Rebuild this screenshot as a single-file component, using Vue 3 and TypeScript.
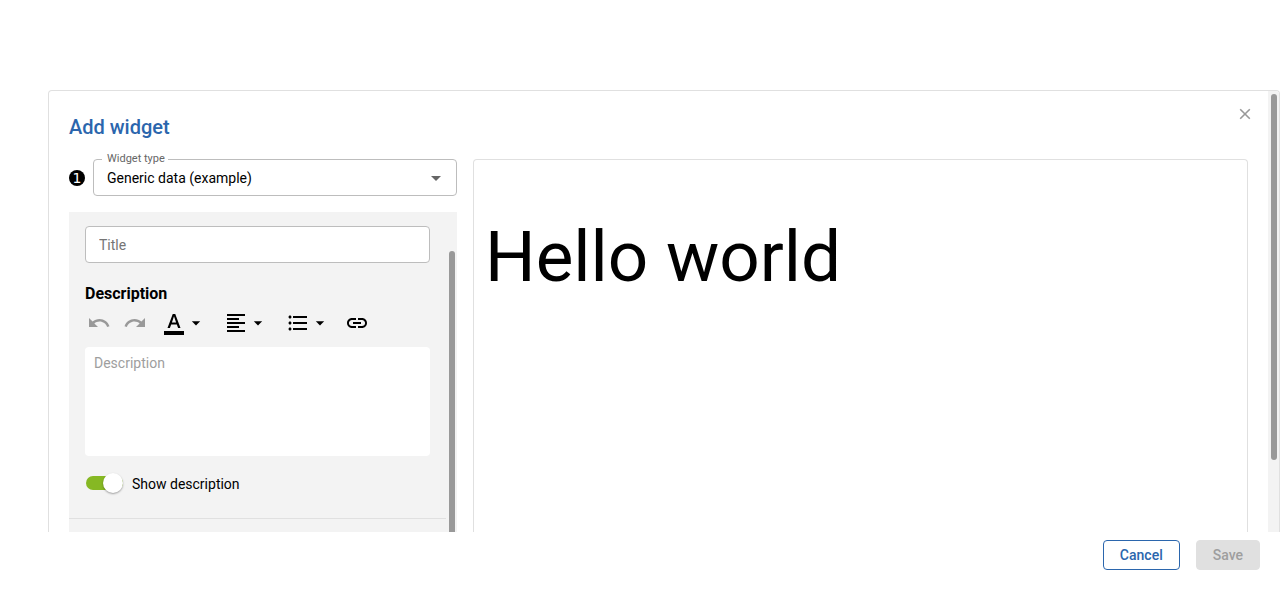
<script setup lang="ts">
import { ref } from 'vue'

interface Tool {
  name: string
  path: string
  menu: boolean
  disabled: boolean
}

const tools: Tool[] = [
  {
    name: 'Undo',
    path: 'M12.5 8c-2.65 0-5.05.99-6.9 2.6L2 7v9h9l-3.62-3.62c1.39-1.16 3.16-1.88 5.12-1.88 3.54 0 6.55 2.31 7.6 5.5l2.37-.78C21.08 11.03 17.15 8 12.5 8z',
    menu: false,
    disabled: true,
  },
  {
    name: 'Redo',
    path: 'M18.4 10.6C16.55 8.99 14.15 8 11.5 8c-4.65 0-8.58 3.03-9.96 7.22L3.9 16c1.05-3.19 4.05-5.5 7.6-5.5 1.95 0 3.73.72 5.12 1.88L13 16h9V7l-3.6 3.6z',
    menu: false,
    disabled: true,
  },
  {
    name: 'Text color',
    path: 'M2 20h20v4H2zM5.49 17h2.42l1.27-3.58h5.65L16.09 17h2.42L13.25 3h-2.5L5.49 17zm4.42-5.61 2.03-5.79h.12l2.03 5.79H9.91z',
    menu: true,
    disabled: false,
  },
  {
    name: 'Alignment',
    path: 'M15 15H3v2h12v-2zm0-8H3v2h12V7zM3 13h18v-2H3v2zm0 8h18v-2H3v2zM3 3v2h18V3H3z',
    menu: true,
    disabled: false,
  },
  {
    name: 'List',
    path: 'M4 10.5c-.83 0-1.5.67-1.5 1.5s.67 1.5 1.5 1.5 1.5-.67 1.5-1.5-.67-1.5-1.5-1.5zm0-6c-.83 0-1.5.67-1.5 1.5S3.17 7.5 4 7.5 5.5 6.83 5.5 6 4.83 4.5 4 4.5zm0 12c-.83 0-1.5.68-1.5 1.5s.68 1.5 1.5 1.5 1.5-.68 1.5-1.5-.67-1.5-1.5-1.5zM7 19h14v-2H7v2zm0-6h14v-2H7v2zm0-8v2h14V5H7z',
    menu: true,
    disabled: false,
  },
  {
    name: 'Link',
    path: 'M3.9 12c0-1.71 1.39-3.1 3.1-3.1h4V7H7c-2.76 0-5 2.24-5 5s2.24 5 5 5h4v-1.9H7c-1.71 0-3.1-1.39-3.1-3.1zM8 13h8v-2H8v2zm9-6h-4v1.9h4c1.71 0 3.1 1.39 3.1 3.1s-1.39 3.1-3.1 3.1h-4V17h4c2.76 0 5-2.24 5-5s-2.24-5-5-5z',
    menu: false,
    disabled: false,
  },
]

const widgetType = ref('generic')
const title = ref('')
const description = ref('')
const showDescription = ref(true)
</script>

<template>
  <div class="page">
    <main class="dialog">
      <div class="content">
        <header class="head">
          <h2>Add widget</h2>
          <button class="close" type="button" aria-label="Close">
            <svg width="12" height="12" viewBox="0 0 12 12">
              <path d="M1.2 1.2l9.6 9.6M10.8 1.2l-9.6 9.6" fill="none" stroke="#999" stroke-width="1.6" />
            </svg>
          </button>
        </header>
        <div class="columns">
          <section class="settings">
            <div class="type-row">
              <span class="step">1</span>
              <div class="field">
                <label for="widget-type">Widget type</label>
                <select id="widget-type" v-model="widgetType">
                  <option value="generic">Generic data (example)</option>
                </select>
                <svg class="arrow" width="24" height="24" viewBox="0 0 24 24">
                  <path d="M7 10l5 5 5-5z" fill="#666" />
                </svg>
              </div>
            </div>
            <div class="panel">
              <div class="form">
                <div class="group">
                  <input v-model="title" class="title" type="text" placeholder="Title" aria-label="Title" />
                  <label class="caption" for="description">Description</label>
                  <div class="toolbar">
                    <button
                      v-for="tool in tools"
                      :key="tool.name"
                      type="button"
                      class="tool"
                      :class="{ menu: tool.menu }"
                      :disabled="tool.disabled"
                      :aria-label="tool.name"
                    >
                      <svg width="24" height="24" viewBox="0 0 24 24"><path :d="tool.path" /></svg>
                      <svg v-if="tool.menu" width="20" height="20" viewBox="0 0 24 24">
                        <path d="M7 10l5 5 5-5z" />
                      </svg>
                    </button>
                  </div>
                  <textarea id="description" v-model="description" placeholder="Description"></textarea>
                  <label class="toggle">
                    <input v-model="showDescription" type="checkbox" role="switch" />
                    Show description
                  </label>
                </div>
              </div>
              <div class="gutter inner"><div class="thumb"></div></div>
            </div>
          </section>
          <section class="preview">
            <p>Hello world</p>
          </section>
        </div>
      </div>
      <div class="gutter outer"><div class="thumb"></div></div>
    </main>
    <footer class="actions">
      <button class="cancel" type="button">Cancel</button>
      <button class="save" type="button" disabled>Save</button>
    </footer>
  </div>
</template>

<style>
body {
  background: #fff;
}
</style>

<style scoped>
* {
  box-sizing: border-box;
}
.page {
  display: flex;
  flex-direction: column;
  height: 100vh;
  padding: 90px 0 0 48px;
  overflow: hidden;
  font: 14px/20px Roboto, "Liberation Sans", sans-serif;
  color: #000;
}
button,
input,
select,
textarea {
  font: inherit;
  color: inherit;
}
button {
  border: 0;
  padding: 0;
  background: none;
}
svg {
  display: block;
}
.dialog {
  display: flex;
  flex: 1;
  min-height: 0;
  border: 1px solid #e0e0e0;
  border-bottom: 0;
  border-radius: 4px 4px 0 0;
  overflow: hidden;
}
.content {
  display: flex;
  flex: 1;
  flex-direction: column;
  min-width: 0;
  padding: 16px 20px 0;
}
.head {
  display: flex;
  justify-content: space-between;
  align-items: flex-start;
  height: 52px;
}
h2 {
  margin: 6px 0 0;
  font-size: 20px;
  line-height: 28px;
  font-weight: 500;
  color: #2b66ad;
}
.close {
  margin: 1px -3px 0 0;
}
.columns {
  display: grid;
  grid-template-columns: 388px 1fr;
  gap: 16px;
  flex: 1;
  min-height: 0;
}
.settings {
  display: flex;
  flex-direction: column;
  min-height: 0;
}
.type-row {
  display: flex;
  align-items: center;
  gap: 8px;
  margin-bottom: 16px;
}
.step {
  width: 16px;
  height: 16px;
  border-radius: 50%;
  background: #000;
  color: #fff;
  font: 14px/16px "DejaVu Sans", sans-serif;
  text-align: center;
}
.field {
  position: relative;
  flex: 1;
}
.field label {
  position: absolute;
  top: -8px;
  left: 9px;
  padding: 0 3px 0 5px;
  background: #fff;
  font-size: 11px;
  line-height: 15px;
  color: #666;
}
select {
  display: block;
  width: 100%;
  height: 37px;
  padding: 0 40px 0 13px;
  border: 1px solid #bdbdbd;
  border-radius: 4px;
  background: #fff;
  appearance: none;
}
.arrow {
  position: absolute;
  top: 7px;
  right: 9px;
  pointer-events: none;
}
.panel {
  display: flex;
  flex: 1;
  min-height: 0;
  background: #f3f3f3;
}
.form {
  flex: 1;
  overflow: hidden;
}
.group {
  padding: 14px 16px 24px;
  border-bottom: 1px solid #e0e0e0;
}
.title {
  display: block;
  width: 100%;
  height: 37px;
  padding: 0 13px;
  border: 1px solid #bdbdbd;
  border-radius: 4px;
  background: #fff;
}
.title::placeholder {
  color: #757575;
}
.caption {
  display: block;
  margin-top: 20px;
  font-size: 16px;
  line-height: 22px;
  font-weight: 700;
}
.toolbar {
  display: flex;
  margin: 0 0 6px -4px;
}
.tool {
  display: flex;
  align-items: center;
  padding: 6px;
  fill: #000;
}
.tool.menu {
  padding: 6px 9px;
}
.tool:disabled {
  fill: #999;
}
textarea {
  display: block;
  width: 100%;
  height: 109px;
  padding: 6px 9px;
  border: 0;
  border-radius: 4px;
  background: #fff;
  resize: none;
}
textarea::placeholder {
  color: #9e9e9e;
}
.toggle {
  display: flex;
  align-items: center;
  gap: 9px;
  margin-top: 18px;
}
.toggle input {
  display: flex;
  align-items: center;
  width: 37px;
  height: 14px;
  margin: 0 0 2px 1px;
  border-radius: 7px;
  background: #bdbdbd;
  appearance: none;
}
.toggle input::before {
  content: "";
  width: 20px;
  height: 20px;
  border-radius: 50%;
  background: #fff;
  box-shadow: 0 1px 2px rgba(0, 0, 0, 0.35);
}
.toggle input:checked {
  justify-content: flex-end;
  background: #86b823;
}
.gutter {
  background: #f3f3f3;
}
.thumb {
  border-radius: 3px;
  background: #999;
}
.inner {
  width: 11px;
  padding: 39px 2px 0 3px;
}
.inner .thumb {
  height: 100%;
  border-radius: 3px 3px 0 0;
}
.outer {
  width: 11px;
  padding: 3px 2px 0 3px;
}
.outer .thumb {
  height: calc(100% - 72px);
}
.preview {
  min-width: 0;
  padding: 55px 11px 0;
  border: 1px solid #e0e0e0;
  border-bottom: 0;
  border-radius: 4px 4px 0 0;
}
.preview p {
  margin: 0;
  font-size: 71px;
  line-height: 84px;
}
.actions {
  display: flex;
  justify-content: flex-end;
  gap: 16px;
  padding: 8px 20px 20px;
}
.actions button {
  height: 30px;
  padding: 0 16px;
  border: 1px solid #2b66ad;
  border-radius: 4px;
  font-weight: 500;
  color: #2b66ad;
}
.actions .save {
  border-color: #e0e0e0;
  background: #e0e0e0;
  color: #9e9e9e;
}
</style>
